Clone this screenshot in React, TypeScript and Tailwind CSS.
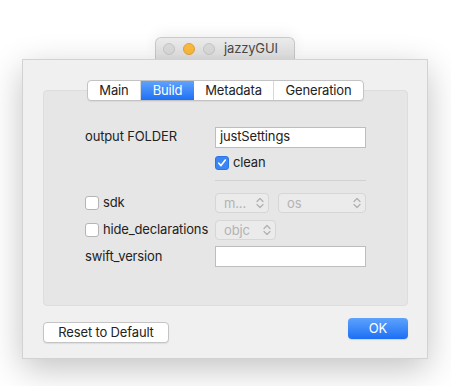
import React from "react";

const Chevrons = ({ color = "#a8a8a8" }: { color?: string }) => (
  <svg width="8" height="12" viewBox="0 0 8 12" fill="none">
    <path d="M1 4.5 L4 1.5 L7 4.5" stroke={color} strokeWidth="1.2" strokeLinecap="round" strokeLinejoin="round" />
    <path d="M1 7.5 L4 10.5 L7 7.5" stroke={color} strokeWidth="1.2" strokeLinecap="round" strokeLinejoin="round" />
  </svg>
);

const Popup = ({ label, w }: { label: string; w: string }) => (
  <div className={`${w} h-[20px] rounded-[4px] border border-[#d6d6d6] bg-[#ebebeb] flex items-center justify-between pl-[8px] pr-[4px] text-[#b3b3b3]`}>
    <span className="leading-none">{label}</span>
    <Chevrons color="#b0b0b0" />
  </div>
);

const Box = ({ checked = false }: { checked?: boolean }) =>
  checked ? (
    <div className="w-[14px] h-[14px] rounded-[3px] bg-[#3b86f7] border border-[#2f74e0] flex items-center justify-center">
      <svg width="10" height="10" viewBox="0 0 10 10" fill="none">
        <path d="M1.8 5.2 L4 7.6 L8.3 2" stroke="white" strokeWidth="1.6" strokeLinecap="round" strokeLinejoin="round" />
      </svg>
    </div>
  ) : (
    <div className="w-[14px] h-[14px] rounded-[3px] bg-white border border-[#b5b5b5]" />
  );

export default function App() {
  return (
    <div
      className="w-[451px] h-[386px] bg-white flex flex-col items-start pt-[37px] text-[13px] tracking-[-0.15px] text-[#222222] overflow-hidden"
      style={{ fontFamily: "Inter, 'Liberation Sans', sans-serif" }}
    >
      {/* title tab */}
      <div className="ml-[155px] w-[140px] h-[22px] rounded-t-[6px] border border-b-0 border-[#cacaca] bg-gradient-to-b from-[#ececec] to-[#e2e2e2] flex items-center pl-[7px] gap-[8px] shadow-[0_-4px_14px_rgba(0,0,0,0.06)]">
        <div className="w-[12px] h-[12px] rounded-full bg-[#dcdcdc] border border-[#c9c9c9]" />
        <div className="w-[12px] h-[12px] rounded-full bg-[#fdbc3f] border border-[#e3a33a]" />
        <div className="w-[12px] h-[12px] rounded-full bg-[#dcdcdc] border border-[#c9c9c9]" />
        <span className="ml-[1px] text-[#4a4a4a] leading-none">jazzyGUI</span>
      </div>

      {/* window */}
      <div className="ml-[22px] w-[406px] h-[300px] bg-[#f0f0f0] border border-[#d2d2d2] shadow-[0_10px_32px_rgba(0,0,0,0.24)] flex flex-col pt-[20px] pl-[20px]">
        {/* tabs */}
        <div className="relative z-10 w-[365px] flex justify-center -mb-[11px]">
          <div className="flex h-[21px] rounded-[4px] border border-[#c3c3c3] bg-white overflow-hidden shadow-[0_1px_1px_rgba(0,0,0,0.06)]">
            <div className="w-[53px] flex items-center justify-center border-r border-[#d8d8d8]">Main</div>
            <div className="w-[53px] flex items-center justify-center bg-gradient-to-b from-[#5fa3fb] to-[#1c6ff5] text-white">Build</div>
            <div className="w-[80px] flex items-center justify-center border-r border-[#d8d8d8]">Metadata</div>
            <div className="w-[89px] flex items-center justify-center">Generation</div>
          </div>
        </div>

        {/* group box */}
        <div className="w-[365px] h-[216px] rounded-[4px] bg-[#e6e6e6] border border-[#dddddd] pt-[36px] pl-[41px] flex flex-col">
          {/* output folder */}
          <div className="flex items-center h-[20px]">
            <span className="w-[130px]">output FOLDER</span>
            <div className="w-[151px] h-[21px] bg-white border border-[#bdbdbd] flex items-center pl-[4px]">justSettings</div>
          </div>
          <div className="flex items-center h-[14px] mt-[9px] pl-[130px] gap-[4px]">
            <Box checked />
            <span>clean</span>
          </div>
          <div className="ml-[130px] w-[151px] h-px bg-[#d2d2d2] mt-[10px]" />
          {/* sdk */}
          <div className="flex items-center h-[20px] mt-[12px]">
            <div className="w-[130px] flex items-center gap-[4px]">
              <Box />
              <span>sdk</span>
            </div>
            <Popup label="m..." w="w-[54px]" />
            <div className="w-[9px]" />
            <Popup label="os" w="w-[88px]" />
          </div>
          {/* hide declarations */}
          <div className="flex items-center h-[20px] mt-[7px]">
            <div className="w-[130px] flex items-center gap-[4px]">
              <Box />
              <span>hide_declarations</span>
            </div>
            <Popup label="objc" w="w-[61px]" />
          </div>
          {/* swift version */}
          <div className="flex items-center h-[21px] mt-[6px]">
            <span className="w-[130px]">swift_version</span>
            <div className="w-[151px] h-[21px] bg-white border border-[#bdbdbd]" />
          </div>
        </div>

        {/* buttons */}
        <div className="w-[365px] flex justify-between items-start mt-[12px]">
          <div className="mt-[4px] w-[126px] h-[21px] rounded-[4px] bg-white border border-[#c4c4c4] shadow-[0_1px_1px_rgba(0,0,0,0.08)] flex items-center justify-center">
            Reset to Default
          </div>
          <div className="w-[60px] h-[21px] rounded-[4px] bg-gradient-to-b from-[#5da2fb] to-[#1b6ef5] text-white flex items-center justify-center shadow-[0_1px_1px_rgba(0,0,0,0.12)]">
            OK
          </div>
        </div>
      </div>
    </div>
  );
}
